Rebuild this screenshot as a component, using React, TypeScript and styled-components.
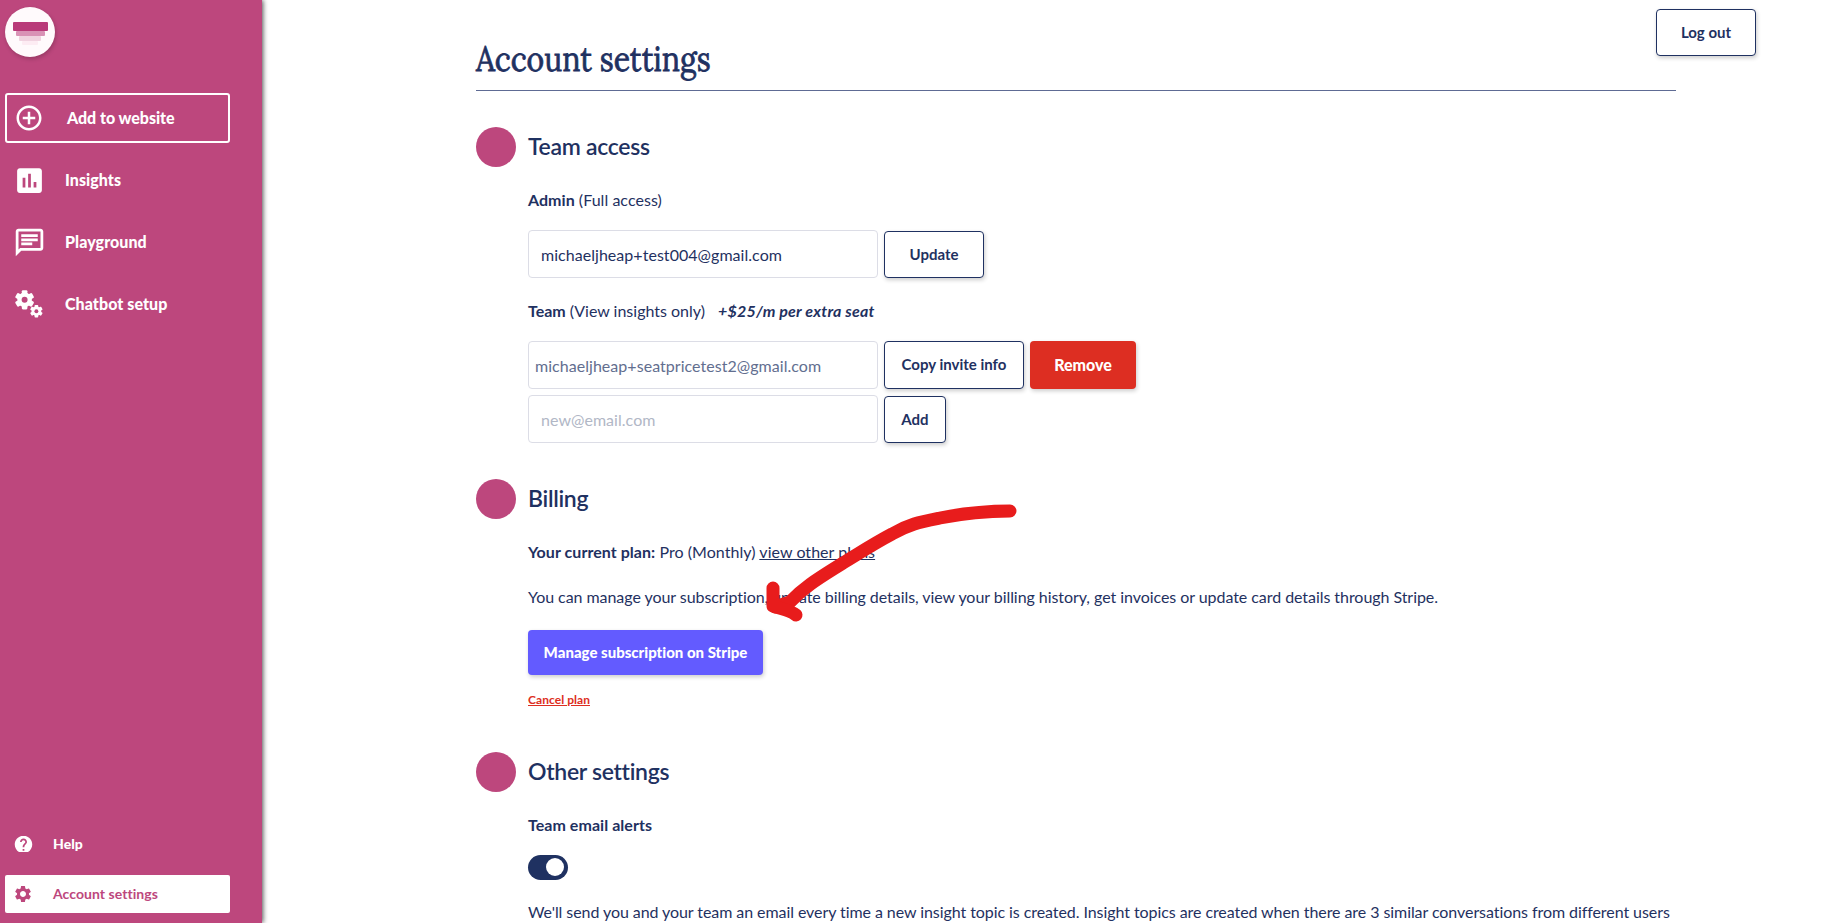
import React from "react";
import styled, { createGlobalStyle, css } from "styled-components";
import { MdAddCircleOutline, MdInsertChart, MdOutlineChat, MdHelp, MdSettings } from "react-icons/md";

const navy = "#1f3161";
const pink = "#bd477d";

const GlobalStyle = createGlobalStyle`
  * { box-sizing: border-box; }
  html, body { margin: 0; height: 100%; overflow: hidden; }
  body { font-family: Lato, sans-serif; font-size: 16px; line-height: 24px; color: ${navy}; background: #fff; }
  body, button, input { font-variant-ligatures: none; }
  p, h1, h2 { margin: 0; }
`;

const Page = styled.div`
  display: flex;
  height: 923px;
  overflow: hidden;
`;

const Sidebar = styled.aside`
  flex: 0 0 262px;
  display: flex;
  flex-direction: column;
  padding: 7px 32px 10px 5px;
  background: ${pink};
  box-shadow: 1px 0 5px rgba(0, 0, 0, 0.7);
`;

const Logo = styled.div`
  display: flex;
  flex-direction: column;
  align-items: center;
  width: 50px;
  height: 50px;
  padding-top: 15px;
  margin-bottom: 36px;
  border-radius: 50%;
  background: #fffafc;
  box-shadow: 1px 2px 4px rgba(0, 0, 0, 0.2);
`;

const LogoBar = styled.span<{ $w: number; $h: number; $c: string }>`
  width: ${(p) => p.$w}px;
  height: ${(p) => p.$h}px;
  background: ${(p) => p.$c};
  border-radius: 1px;
`;

const Nav = styled.nav`
  display: flex;
  flex-direction: column;
  gap: 12px;
`;

const NavItem = styled.a<{ $outlined?: boolean }>`
  display: flex;
  align-items: center;
  height: 50px;
  color: #fff;
  font-weight: 900;
  font-size: 16px;
  letter-spacing: ${(p) => (p.$outlined ? -0.04 : 0.06)}px;
  border: 2px solid ${(p) => (p.$outlined ? "#fff" : "transparent")};
  border-radius: 3px;
`;

const NavIcon = styled.span<{ $gap?: number }>`
  display: flex;
  justify-content: center;
  flex: 0 0 44px;
  margin-right: ${(p) => p.$gap || 14}px;
`;

const BottomNav = styled(Nav)`
  margin-top: auto;
`;

const SmallItem = styled.a<{ $active?: boolean }>`
  display: flex;
  align-items: center;
  height: 38px;
  padding-left: 8px;
  font-size: 14px;
  letter-spacing: 0.05px;
  font-weight: ${(p) => (p.$active ? 700 : 900)};
  color: ${(p) => (p.$active ? pink : "#fff")};
  background: ${(p) => (p.$active ? "#fff" : "transparent")};
  border-radius: 2px;
`;

const SmallIcon = styled.span`
  display: flex;
  align-items: center;
  justify-content: center;
  flex: 0 0 20px;
  height: 16px;
  margin-right: 20px;
  overflow: hidden;
  svg { flex: none; }
`;

const Main = styled.main`
  flex: 1;
  min-width: 0;
  display: flex;
  padding: 0 75px 0 214px;
`;

const Content = styled.div`
  flex: 0 0 1200px;
  min-width: 0;
`;

const TopRight = styled.div`
  flex: 0 0 80px;
  min-width: 0;
  display: flex;
  justify-content: flex-end;
  padding-top: 9px;
`;

const Title = styled.h1`
  height: 91px;
  padding-top: 39px;
  margin-bottom: 36px;
  border-bottom: 1px solid #5e6b94;
  font-family: Lora, "Liberation Serif", serif;
  font-size: 35px;
  line-height: 40px;
  font-weight: 400;
  white-space: nowrap;
  -webkit-text-stroke: 0.8px ${navy};
`;

const Condensed = styled.span`
  display: inline-block;
  transform: scaleX(0.86);
  transform-origin: left;
`;

const Section = styled.section<{ $h?: number }>`
  height: ${(p) => (p.$h ? p.$h + "px" : "auto")};
`;

const SectionHead = styled.div`
  display: flex;
  align-items: center;
  gap: 12px;
  height: 40px;
`;

const Dot = styled.span`
  width: 40px;
  height: 40px;
  border-radius: 50%;
  background: ${pink};
`;

const SectionTitle = styled.h2`
  padding-bottom: 3px;
  font-size: 23px;
  line-height: 30px;
  font-weight: 600;
  letter-spacing: -0.3px;
`;

const Body = styled.div`
  padding: 21px 0 0 52px;
`;

const Line = styled.p<{ $mb: number; $ls?: number }>`
  height: 24px;
  margin-bottom: ${(p) => p.$mb}px;
  letter-spacing: ${(p) => p.$ls || 0}px;
  line-height: 23px;
  white-space: nowrap;
`;

const Strong = styled.span`
  font-weight: 700;
`;

const Extra = styled.em`
  margin-left: 9px;
  font-weight: 700;
  letter-spacing: 0.2px;
`;

const Row = styled.div<{ $mb?: number }>`
  display: flex;
  align-items: flex-end;
  gap: 6px;
  height: 48px;
  margin-bottom: ${(p) => p.$mb || 0}px;
`;

const Field = styled.input<{ $tight?: boolean }>`
  width: 350px;
  height: 48px;
  padding: 1px ${(p) => (p.$tight ? 6 : 12)}px 0;
  border: 1px solid #dcdde6;
  border-radius: 4px;
  background: #fff;
  font-family: Lato, sans-serif;
  font-size: 16px;
  letter-spacing: 0.04px;
  color: ${(p) => (p.$tight ? "#626e8f" : navy)};
  outline: none;
  &::placeholder { color: #b1b7c6; opacity: 1; }
`;

const filled = css`
  border: 0;
  color: #fff;
  font-weight: 900;
`;

const Button = styled.button<{ $w: number; $h?: number; $fill?: string; $size?: number }>`
  flex: 0 0 auto;
  width: ${(p) => p.$w}px;
  height: ${(p) => p.$h || 47}px;
  padding: 0 0 2px;
  border: 1px solid ${navy};
  border-radius: 4px;
  background: ${(p) => p.$fill || "#fff"};
  color: ${navy};
  font-family: Lato, sans-serif;
  font-size: ${(p) => p.$size || 15}px;
  font-weight: 700;
  white-space: nowrap;
  box-shadow: 1px 2px 4px rgba(0, 0, 0, 0.2);
  ${(p) => p.$fill && filled}
`;

const Link = styled.a`
  text-decoration: underline;
`;

const Cancel = styled.a`
  display: block;
  margin-top: 13px;
  font-size: 12px;
  font-weight: 700;
  letter-spacing: 0.05px;
  color: #dd2e22;
  text-decoration: underline;
`;

const Toggle = styled.span`
  display: flex;
  justify-content: flex-end;
  width: 40px;
  height: 25px;
  padding: 3px 4px;
  margin-bottom: 20px;
  border-radius: 13px;
  background: ${navy};
`;

const Knob = styled.span`
  width: 18px;
  height: 18px;
  border-radius: 50%;
  background: #fff;
`;

const Arrow = styled.svg`
  position: absolute;
  left: 760px;
  top: 498px;
  pointer-events: none;
`;

function Gear({ x, y, r }: { x: number; y: number; r: number }) {
  return (
    <g transform={`translate(${x} ${y}) scale(${r / 10})`}>
      <circle r="7.6" fill="#fff" />
      {[0, 60, 120, 180, 240, 300].map((a) => (
        <rect key={a} x="-2.9" y="-10" width="5.8" height="8" rx="1.2" fill="#fff" transform={`rotate(${a})`} />
      ))}
      <circle r="3.1" fill={pink} />
    </g>
  );
}

export default function App() {
  return (
    <Page>
      <GlobalStyle />
      <Sidebar>
        <Logo>
          <LogoBar $w={35} $h={9} $c="#b93a79" />
          <LogoBar $w={29} $h={5} $c="#d992b6" />
          <LogoBar $w={22} $h={5} $c="#f0d3e0" />
          <LogoBar $w={16} $h={4} $c="#fdecf3" />
        </Logo>
        <Nav>
          <NavItem $outlined><NavIcon $gap={16}><MdAddCircleOutline size={30} /></NavIcon>Add to website</NavItem>
          <NavItem><NavIcon><MdInsertChart size={33} /></NavIcon>Insights</NavItem>
          <NavItem><NavIcon><MdOutlineChat size={33} /></NavIcon>Playground</NavItem>
          <NavItem>
            <NavIcon>
              <svg width="28" height="28" viewBox="0 0 28 28">
                <Gear x={9.6} y={9.8} r={9.6} />
                <Gear x={21.4} y={21.2} r={6.3} />
              </svg>
            </NavIcon>
            Chatbot setup
          </NavItem>
        </Nav>
        <BottomNav>
          <SmallItem><SmallIcon><MdHelp size={21} /></SmallIcon>Help</SmallItem>
          <SmallItem $active><SmallIcon><MdSettings size={20} /></SmallIcon>Account settings</SmallItem>
        </BottomNav>
      </Sidebar>
      <Main>
        <Content>
          <Title><Condensed>Account settings</Condensed></Title>
          <Section $h={352}>
            <SectionHead><Dot /><SectionTitle>Team access</SectionTitle></SectionHead>
            <Body>
              <Line $mb={18} $ls={0.04}><Strong>Admin</Strong> (Full access)</Line>
              <Row $mb={21}>
                <Field defaultValue="michaeljheap+test004@gmail.com" />
                <Button $w={100}>Update</Button>
              </Row>
              <Line $mb={18}><Strong>Team</Strong> (View insights only) <Extra>+$25/m per extra seat</Extra></Line>
              <Row $mb={6}>
                <Field $tight defaultValue="michaeljheap+seatpricetest2@gmail.com" />
                <Button $w={140} $h={48}>Copy invite info</Button>
                <Button $w={106} $h={48} $fill="#dd2e22" $size={16}>Remove</Button>
              </Row>
              <Row>
                <Field placeholder="new@email.com" />
                <Button $w={62}>Add</Button>
              </Row>
            </Body>
          </Section>
          <Section $h={273}>
            <SectionHead><Dot /><SectionTitle>Billing</SectionTitle></SectionHead>
            <Body>
              <Line $mb={21} $ls={0.05}><Strong>Your current plan:</Strong> Pro (Monthly) <Link>view other plans</Link></Line>
              <Line $mb={21} $ls={-0.055}>You can manage your subscription, update billing details, view your billing history, get invoices or update card details through Stripe.</Line>
              <Button $w={235} $h={45} $fill="#635bff">Manage subscription on Stripe</Button>
              <Cancel>Cancel plan</Cancel>
            </Body>
          </Section>
          <Section>
            <SectionHead><Dot /><SectionTitle>Other settings</SectionTitle></SectionHead>
            <Body>
              <Line $mb={18} $ls={0.05}><Strong>Team email alerts</Strong></Line>
              <Toggle><Knob /></Toggle>
              <Line $mb={0} $ls={-0.07}>We'll send you and your team an email every time a new insight topic is created. Insight topics are created when there are 3 similar conversations from different users</Line>
            </Body>
          </Section>
        </Content>
        <TopRight><Button $w={100}>Log out</Button></TopRight>
      </Main>
      <Arrow width="264" height="130" viewBox="760 498 264 130" fill="none" stroke="#e81c1c" strokeWidth="13" strokeLinecap="round" strokeLinejoin="round">
        <path d="M1010 511C980 511 960 514 940 518C920 522 909 524 892 534C873 544 858 554 843 563C821 577 805 586 790 602L775 607" />
        <path d="M773 588V606C780 609 789 609 796 615" />
      </Arrow>
    </Page>
  );
}
